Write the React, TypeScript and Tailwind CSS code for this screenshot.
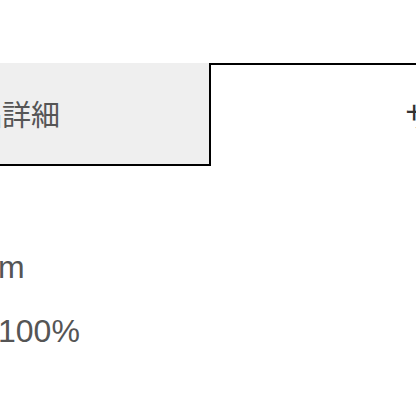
export default function App() {
  const font = { fontFamily: '"Liberation Sans", "Noto Sans CJK JP", sans-serif' };
  return (
    <div className="w-[416px] h-[416px] overflow-hidden bg-white" style={font}>
      <div className="flex ml-[-208px] mt-[63px] h-[103px] w-[832px]">
        <div className="w-[417px] shrink-0 bg-[#efefef] border-b-2 border-[#000] flex items-center justify-center text-[29px] text-[#555] pl-[3px] pt-[6px]">
          商品詳細
        </div>
        <div className="w-[415px] shrink-0 border-2 border-b-0 border-[#000] flex items-center pl-[194px] pt-[6px] text-[29px] text-[#333]">
          サイズ
        </div>
      </div>
      <div className="mt-[83px] flex flex-col gap-[28px] text-[32px] text-[#555] leading-[36px] ml-[-2px]">
        <div>m</div>
        <div>100%</div>
      </div>
    </div>
  );
}
